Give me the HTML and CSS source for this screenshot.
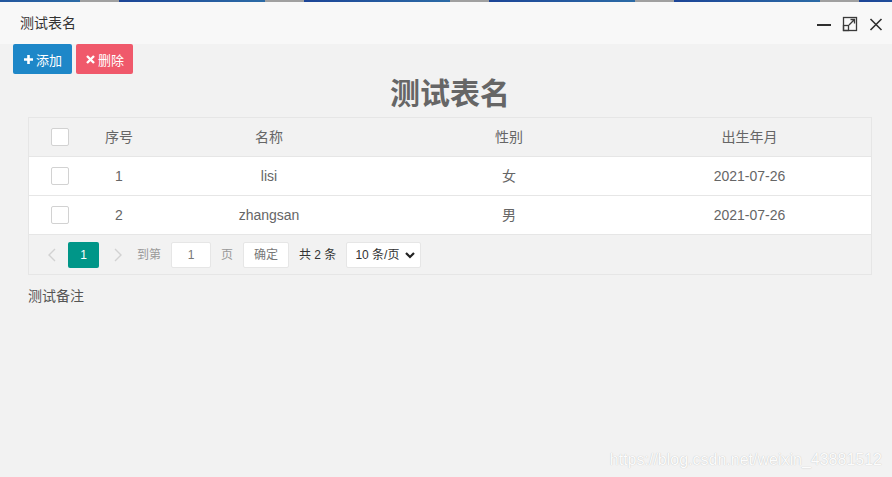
FILE: index.html
```html
<!DOCTYPE html>
<html lang="zh-CN">
<head>
<meta charset="utf-8">
<title>测试表名</title>
<link rel="stylesheet" href="styles.css">
</head>
<body>
<div class="window">
  <div class="stripe"></div>
  <div class="titlebar">
    <span class="title">测试表名</span>
    <div class="win-ctrls">
      <svg class="ic" width="16" height="16" viewBox="0 0 16 16"><path d="M1 9h14" stroke="#2f2f2f" stroke-width="2"/></svg>
      <svg class="ic" width="16" height="16" viewBox="0 0 16 16" fill="none" stroke="#3a3a3a" stroke-width="1.3"><rect x="1.5" y="1.5" width="13" height="13"/><rect x="1.5" y="9.5" width="5" height="5"/><path d="M7 9L12.5 3.5M8.5 3.5h4v4"/></svg>
      <svg class="ic" width="16" height="16" viewBox="0 0 16 16" fill="none" stroke="#2f2f2f" stroke-width="1.6"><path d="M2.5 3L13.5 14M13.5 3L2.5 14"/></svg>
    </div>
  </div>
  <div class="content">
    <div class="toolbar">
      <button class="btn btn-blue"><svg width="9" height="9" viewBox="0 0 9 9"><path d="M4.5 0v9M0 4.5h9" stroke="#fff" stroke-width="2.6"/></svg>添加</button>
      <button class="btn btn-red"><svg width="9" height="9" viewBox="0 0 9 9"><path d="M1 1l7 7M8 1L1 8" stroke="#fff" stroke-width="2.4"/></svg>删除</button>
    </div>
    <div class="main">
      <h1 class="heading">测试表名</h1>
      <div class="table">
        <div class="row head">
          <div class="cell"><span class="cb"></span></div>
          <div class="cell">序号</div>
          <div class="cell">名称</div>
          <div class="cell">性别</div>
          <div class="cell">出生年月</div>
        </div>
        <div class="row">
          <div class="cell"><span class="cb"></span></div>
          <div class="cell">1</div>
          <div class="cell">lisi</div>
          <div class="cell">女</div>
          <div class="cell">2021-07-26</div>
        </div>
        <div class="row">
          <div class="cell"><span class="cb"></span></div>
          <div class="cell">2</div>
          <div class="cell">zhangsan</div>
          <div class="cell">男</div>
          <div class="cell">2021-07-26</div>
        </div>
        <div class="pager">
          <span class="pg-arrow pg-prev"><svg width="8" height="14" viewBox="0 0 8 14"><path d="M7 1L1 7l6 6" fill="none" stroke="#d2d2d2" stroke-width="1.4"/></svg></span>
          <span class="pg-cur">1</span>
          <span class="pg-arrow pg-next"><svg width="8" height="14" viewBox="0 0 8 14"><path d="M1 1l6 6-6 6" fill="none" stroke="#d2d2d2" stroke-width="1.4"/></svg></span>
          <span class="pg-text">到第</span>
          <span class="pg-input">1</span>
          <span class="pg-text">页</span>
          <span class="pg-btn">确定</span>
          <span class="pg-count">共 2 条</span>
          <span class="pg-select">10 条/页<svg width="10" height="7" viewBox="0 0 10 7"><path d="M1 1l4 4 4-4" fill="none" stroke="#222" stroke-width="2.2"/></svg></span>
        </div>
      </div>
      <p class="note">测试备注</p>
    </div>
  </div>
  <div class="watermark">https://blog.csdn.net/weixin_43881512</div>
</div>
</body>
</html>
```
FILE: styles.css
```css
html, body {
  margin: 0;
  padding: 0;
  height: 100%;
}
body {
  font-family: "Liberation Sans", "Noto Sans CJK SC", sans-serif;
  font-size: 14px;
  color: #666;
  background: #f2f2f2;
}
.window {
  position: relative;
  height: 477px;
  overflow: hidden;
}
.stripe {
  height: 2px;
  background-image: linear-gradient(90deg, #1c4597 0, #2c6ba6 146px, #a0a0a0 146px, #a0a0a0 185px);
  background-size: 185px 2px;
  background-position: -66px 0;
  background-repeat: repeat-x;
}
.titlebar {
  height: 42px;
  background: #f8f8f8;
  display: flex;
  align-items: center;
  justify-content: space-between;
  padding: 0 8px 0 20px;
}
.title {
  color: #333;
  font-size: 14px;
  line-height: 20px;
}
.win-ctrls {
  display: flex;
  gap: 10px;
  align-items: center;
  margin-top: 2px;
}
.ic {
  display: block;
}
.toolbar {
  display: flex;
  gap: 4px;
  padding-left: 13px;
}
.btn {
  height: 30px;
  padding: 0 10px 0 11px;
  border: 0;
  border-radius: 2px;
  color: #fff;
  font-family: inherit;
  font-size: 13px;
  display: flex;
  align-items: center;
  gap: 3px;
  cursor: pointer;
}
.btn-blue { background: #1e87c8; }
.btn-red { background: #f0596b; padding: 0 9px 0 10px; }
.main {
  margin: 0 20px 0 28px;
}
.heading {
  margin: 0;
  height: 43px;
  line-height: 36px;
  text-align: center;
  font-size: 30px;
  font-weight: 700;
  color: #666;
  box-sizing: border-box;
  padding-top: 2px;
}
.table {
  border: 1px solid #e6e6e6;
}
.row {
  display: grid;
  grid-template-columns: 61px 58px 242px 238px 1fr;
  height: 38px;
  border-bottom: 1px solid #e6e6e6;
  background: #fff;
}
.row.head {
  background: #f2f2f2;
}
.cell {
  display: flex;
  align-items: center;
  justify-content: center;
  line-height: 20px;
}
.cb {
  display: block;
  width: 16px;
  height: 16px;
  border: 1px solid #d2d2d2;
  border-radius: 2px;
  background: #fff;
}
.pager {
  height: 39px;
  box-sizing: border-box;
  padding: 7px 0 0 7px;
  display: flex;
  align-items: flex-start;
  font-size: 12px;
}
.pager > span {
  height: 26px;
  line-height: 26px;
  box-sizing: border-box;
}
.pg-arrow {
  display: flex;
  align-items: center;
  justify-content: center;
}
.pg-prev { width: 32px; }
.pg-next { width: 38px; }
.pg-cur {
  width: 31px;
  background: #009688;
  color: #fff;
  text-align: center;
  border-radius: 2px;
}
.pg-text {
  color: #999;
}
.pg-input {
  width: 40px;
  margin: 0 10px;
  background: #fff;
  border: 1px solid #e6e6e6;
  border-radius: 2px;
  text-align: center;
  color: #777;
  line-height: 24px !important;
}
.pg-btn {
  width: 46px;
  margin-left: 10px;
  background: #fff;
  border: 1px solid #e6e6e6;
  border-radius: 2px;
  text-align: center;
  color: #777;
  line-height: 24px !important;
}
.pg-count {
  margin-left: 10px;
  color: #333;
}
.pg-select {
  width: 75px;
  margin-left: 10px;
  background: #fff;
  border: 1px solid #e6e6e6;
  border-radius: 2px;
  color: #333;
  display: flex;
  align-items: center;
  justify-content: space-between;
  padding: 0 5px 0 8px;
  line-height: 24px !important;
}
.note {
  margin: 11px 0 0;
  line-height: 20px;
  color: #555;
}
.watermark {
  position: absolute;
  right: 10px;
  bottom: 8px;
  font-size: 16px;
  color: #fcfcfc;
  text-shadow: 0 0 1px rgba(0, 0, 0, 0.25);
}
```
